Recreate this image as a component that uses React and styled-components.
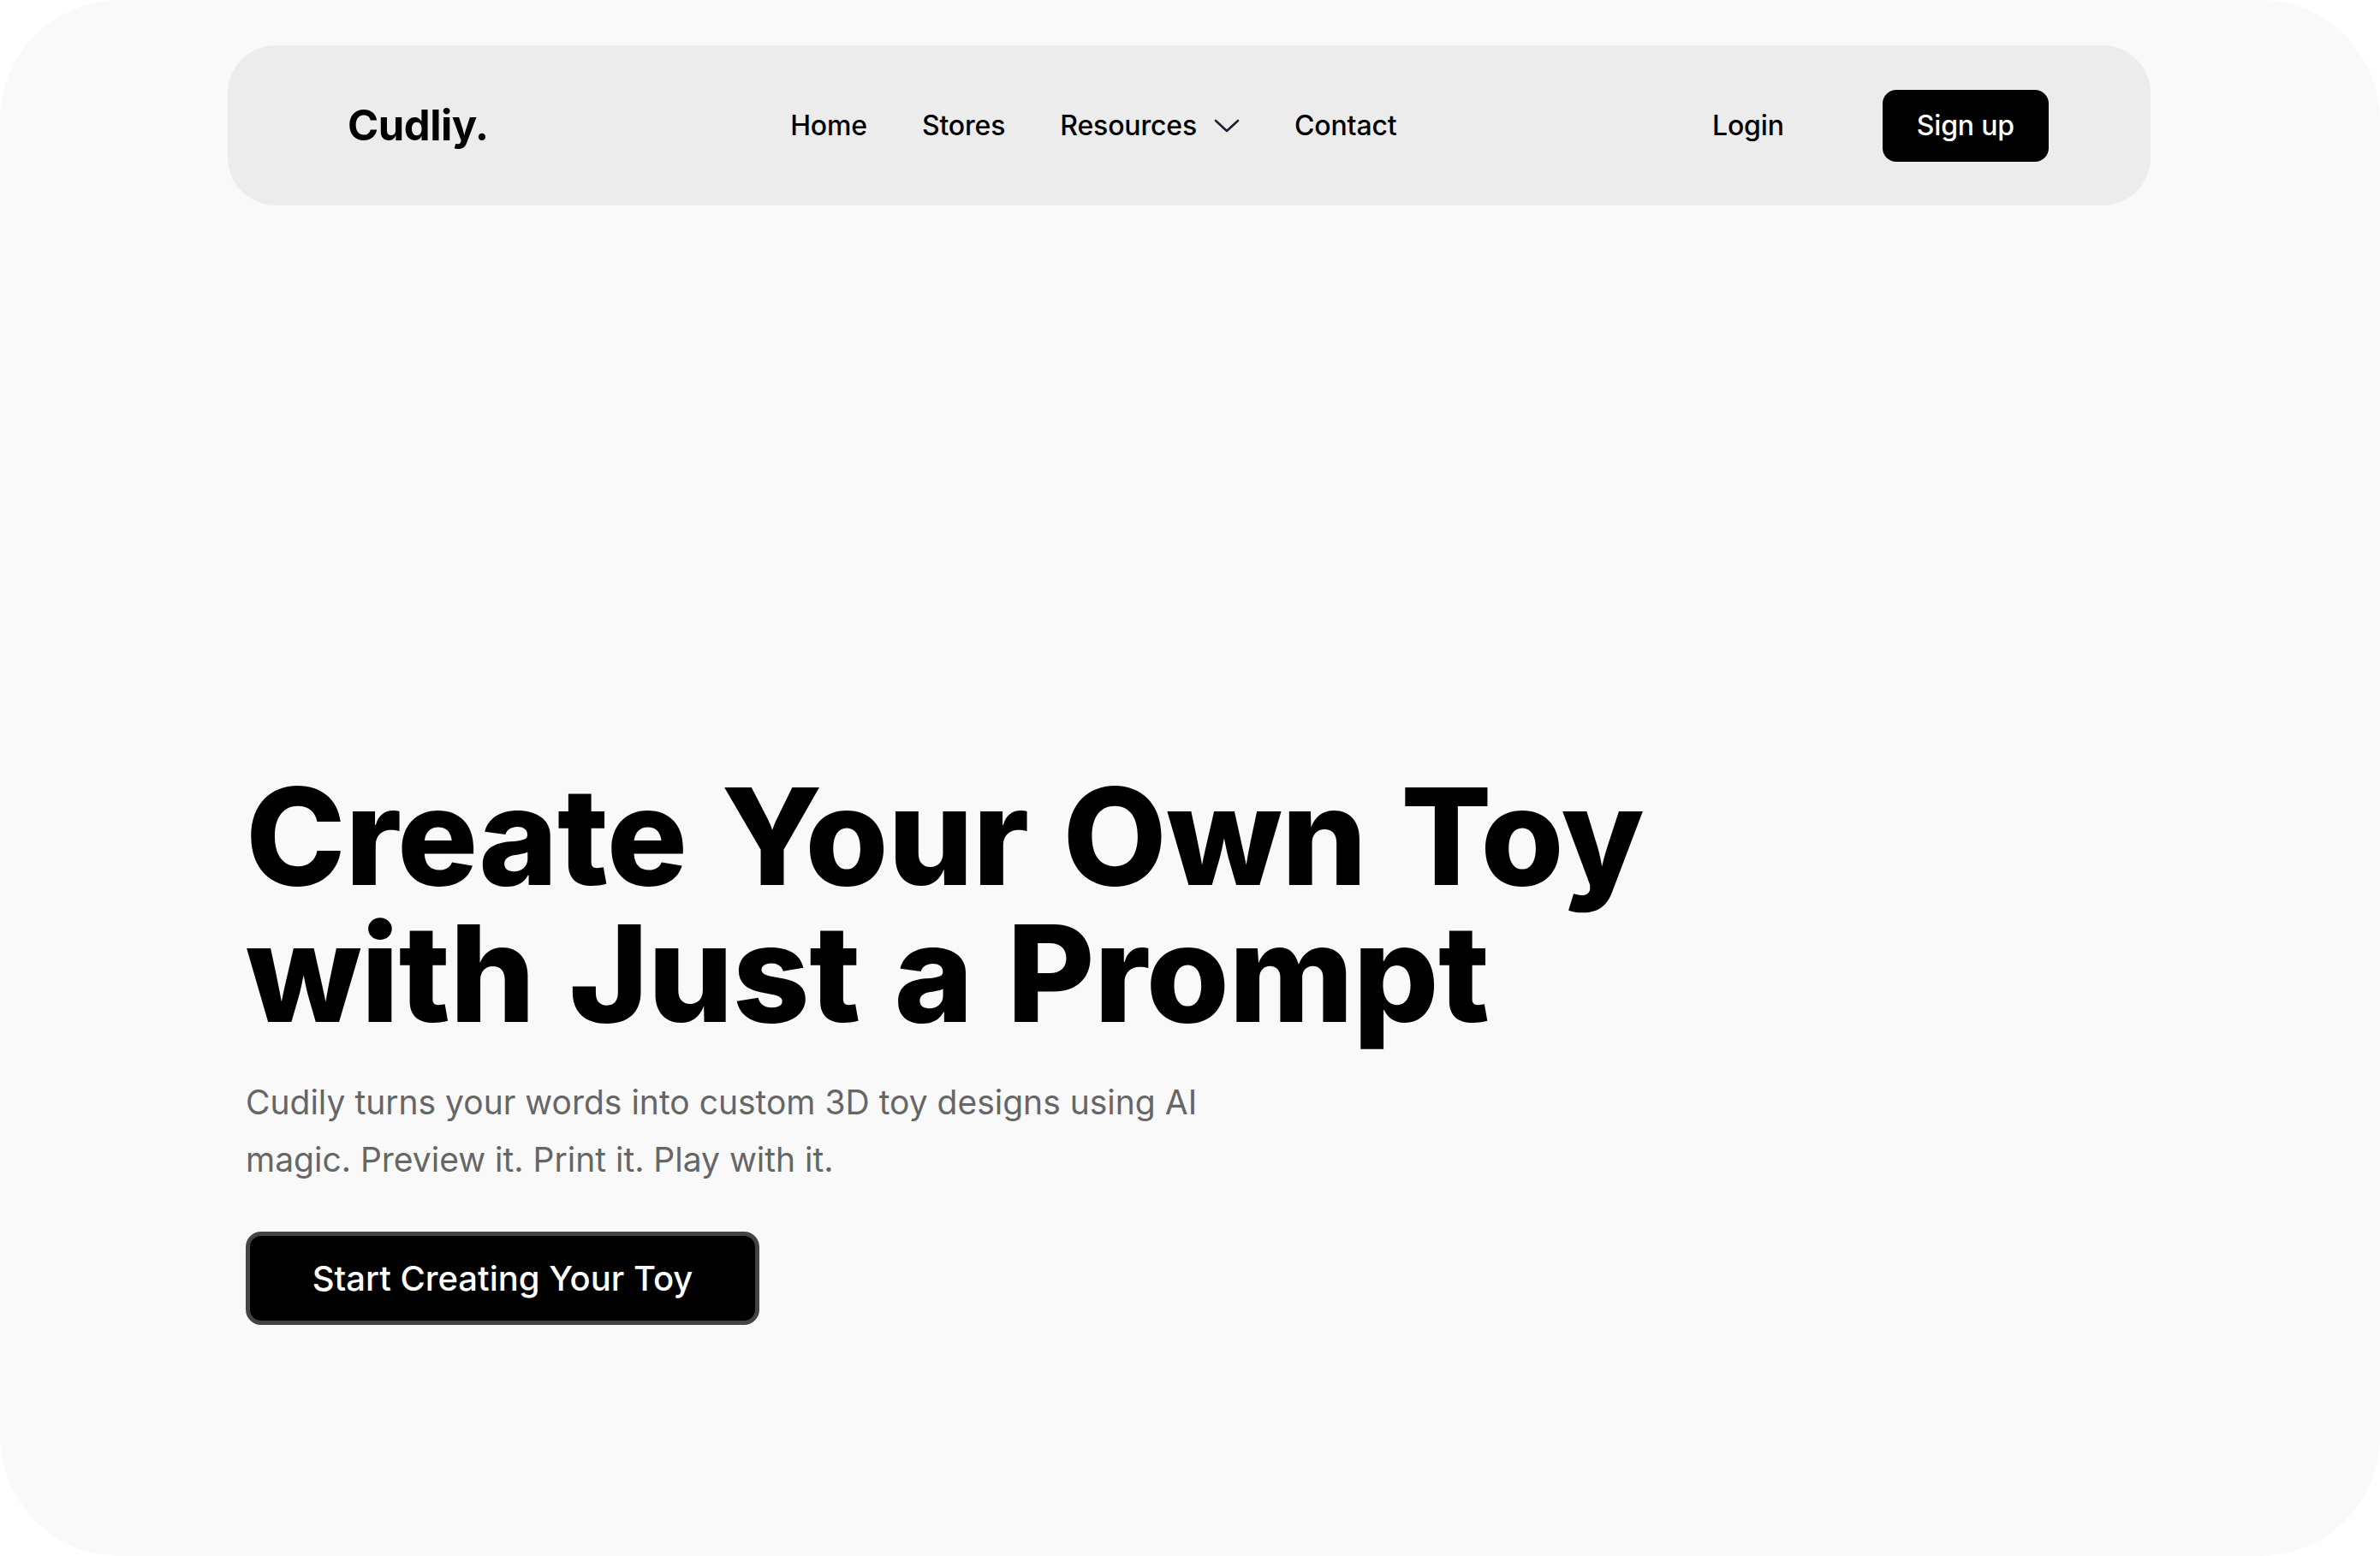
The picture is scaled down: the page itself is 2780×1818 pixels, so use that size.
import React from 'react';
import styled, { createGlobalStyle } from 'styled-components';

const GlobalStyle = createGlobalStyle`
  html, body {
    margin: 0;
    padding: 0;
    background: #ffffff;
  }
  body {
    font-family: Inter, "Noto Sans", "Liberation Sans", sans-serif;
    color: #000;
  }
  * {
    box-sizing: border-box;
  }
`;

const Page = styled.div`
  min-height: 100vh;
  background-color: #f9f9f9;
  border-radius: 140px;
  padding: 53px 268px 0 266px;
  display: flex;
  flex-direction: column;
`;

const Nav = styled.nav`
  height: 187px;
  background-color: #ececec;
  border-radius: 56px;
  padding: 0 119px 0 140px;
  display: flex;
  align-items: center;
  justify-content: space-between;
`;

const Logo = styled.div`
  font-size: 49px;
  font-weight: 700;
  letter-spacing: -0.01em;
`;

const Links = styled.ul`
  list-style: none;
  margin: 0 0 0 -16px;
  padding: 0;
  display: flex;
  align-items: center;
  gap: 64px;
`;

const LinkItem = styled.li`
  display: flex;
  align-items: center;
  gap: 20px;
  font-size: 32px;
  font-weight: 500;
  letter-spacing: -0.005em;
`;

const Chevron = styled.svg`
  width: 30px;
  height: 16px;
  color: #1c1f33;
`;

const RightGroup = styled.div`
  display: flex;
  align-items: center;
  gap: 115px;
`;

const LoginLink = styled.span`
  font-size: 32px;
  font-weight: 500;
  letter-spacing: -0.005em;
`;

const SignUp = styled.button`
  height: 84px;
  padding: 0 40px;
  border: none;
  border-radius: 16px;
  background: #000;
  color: #fff;
  font-family: inherit;
  font-size: 32px;
  font-weight: 500;
  letter-spacing: -0.005em;
`;

const Hero = styled.section`
  padding: 657px 0 0 21px;
  display: flex;
  flex-direction: column;
  align-items: flex-start;
`;

const Heading = styled.h1`
  margin: 0;
  font-size: 157px;
  line-height: 160px;
  font-weight: 800;
  letter-spacing: -0.004em;
  word-spacing: 0.04em;
  color: #000;
`;

const Lead = styled.p`
  margin: 37px 0 0;
  max-width: 1190px;
  font-size: 39px;
  line-height: 67px;
  font-weight: 400;
  letter-spacing: 0;
  color: #666666;
`;

const Cta = styled.button`
  margin-top: 51px;
  width: 600px;
  height: 109px;
  border: 5px solid #444444;
  border-radius: 18px;
  background: #000;
  color: #fff;
  font-family: inherit;
  font-size: 40px;
  font-weight: 500;
  letter-spacing: 0;
`;

export default function App() {
  return (
    <>
      <GlobalStyle />
      <Page>
        <Nav>
          <Logo>Cudliy.</Logo>
          <Links>
            <LinkItem>Home</LinkItem>
            <LinkItem>Stores</LinkItem>
            <LinkItem>
              Resources
              <Chevron viewBox="0 0 30 16" fill="none">
                <path d="M2 2l13 12L28 2" stroke="currentColor" strokeWidth="2.6" strokeLinecap="round" strokeLinejoin="round" />
              </Chevron>
            </LinkItem>
            <LinkItem>Contact</LinkItem>
          </Links>
          <RightGroup>
            <LoginLink>Login</LoginLink>
            <SignUp>Sign up</SignUp>
          </RightGroup>
        </Nav>
        <Hero>
          <Heading>
            Create Your Own Toy
            <br />
            with Just a Prompt
          </Heading>
          <Lead>
            Cudily turns your words into custom 3D toy designs using AI magic. Preview it. Print it. Play with it.
          </Lead>
          <Cta>Start Creating Your Toy</Cta>
        </Hero>
      </Page>
    </>
  );
}
